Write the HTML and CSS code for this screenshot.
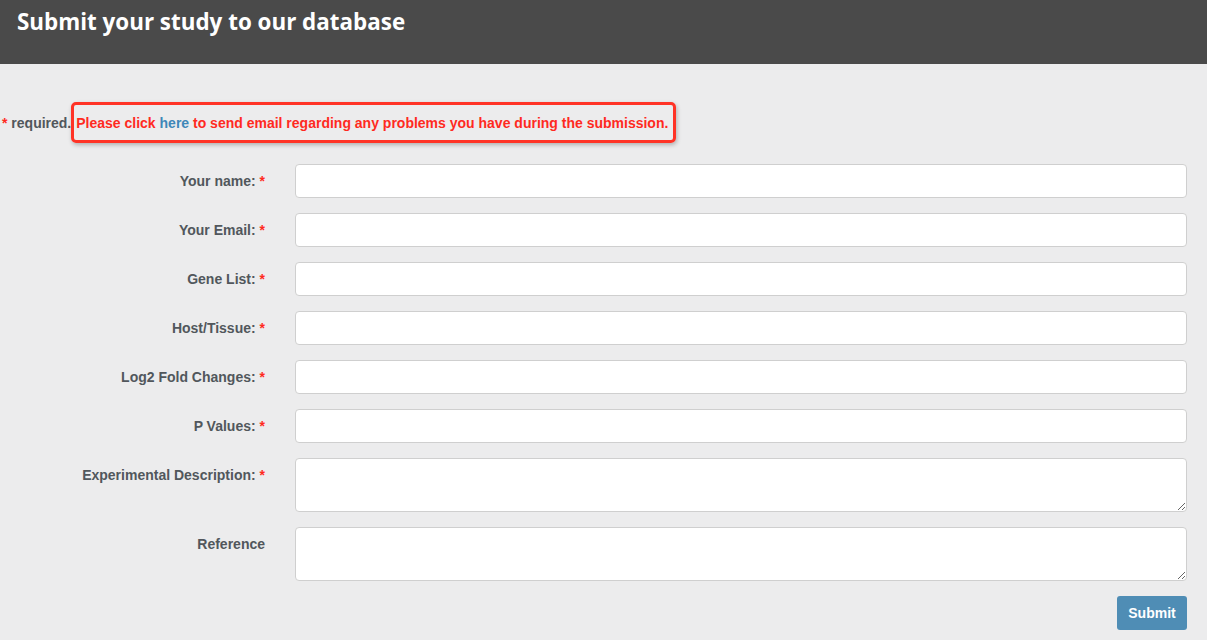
FILE: index.html
```html
<!DOCTYPE html>
<html>
<head>
<meta charset="utf-8">
<link rel="stylesheet" href="styles.css">
</head>
<body>
<header class="topbar">
  <h1 class="title">Submit your study to our database</h1>
</header>
<main class="content">
  <p class="notice"><span class="req">*</span> required.<span class="callout">Please click <a class="link" href="#">here</a> to send email regarding any problems you have during the submission.</span></p>
  <form class="form">
    <label class="label">Your name: <span class="req">*</span></label>
    <input class="field" type="text">
    <label class="label">Your Email: <span class="req">*</span></label>
    <input class="field" type="text">
    <label class="label">Gene List: <span class="req">*</span></label>
    <input class="field" type="text">
    <label class="label">Host/Tissue: <span class="req">*</span></label>
    <input class="field" type="text">
    <label class="label">Log2 Fold Changes: <span class="req">*</span></label>
    <input class="field" type="text">
    <label class="label">P Values: <span class="req">*</span></label>
    <input class="field" type="text">
    <label class="label">Experimental Description: <span class="req">*</span></label>
    <textarea class="field area"></textarea>
    <label class="label">Reference</label>
    <textarea class="field area"></textarea>
    <div class="actions">
      <button class="submit" type="button">Submit</button>
    </div>
  </form>
</main>
</body>
</html>
```
FILE: styles.css
```css
html, body {
  margin: 0;
  padding: 0;
}
body {
  background: #ececed;
  font-family: "Liberation Sans", Arial, sans-serif;
  color: #51575c;
  height: 640px;
  overflow: hidden;
}
.topbar {
  background: #4a4a4a;
  height: 64px;
  box-sizing: border-box;
  padding: 8px 17px 0;
}
.title {
  margin: 0;
  font-family: "Open Sans", sans-serif;
  font-weight: 700;
  font-size: 22.4px;
  line-height: 28px;
  color: #ffffff;
}
.content {
  padding: 38px 20px 0 2px;
}
.notice {
  margin: 0;
  font-size: 14px;
  font-weight: 700;
  line-height: 16px;
  color: #51575c;
}
.req {
  color: #ff2a1f;
}
.callout {
  display: inline-block;
  color: #ff2a1f;
  border: 3px solid #ff3326;
  border-radius: 5px;
  padding: 10px 5px 9px 2px;
  box-shadow: 1px 2px 4px rgba(0, 0, 0, 0.25);
}
.link {
  color: #3e87b8;
  text-decoration: none;
}
.form {
  margin-top: 21px;
  display: grid;
  grid-template-columns: 263px 1fr;
  column-gap: 30px;
  row-gap: 15px;
}
.label {
  text-align: right;
  font-size: 14px;
  font-weight: 700;
  line-height: 16px;
  padding-top: 9px;
  color: #51575c;
}
.field {
  box-sizing: border-box;
  height: 34px;
  background: #ffffff;
  border: 1px solid #cfcfcf;
  border-radius: 4px;
  margin: 0;
  font-family: inherit;
}
.area {
  height: 54px;
  resize: vertical;
}
.actions {
  grid-column: 2;
  display: flex;
  justify-content: flex-end;
}
.submit {
  width: 70px;
  height: 34px;
  border: none;
  border-radius: 3px;
  background: #4f8db5;
  color: #ffffff;
  font-family: "Liberation Sans", Arial, sans-serif;
  font-weight: 700;
  font-size: 14px;
}
```
